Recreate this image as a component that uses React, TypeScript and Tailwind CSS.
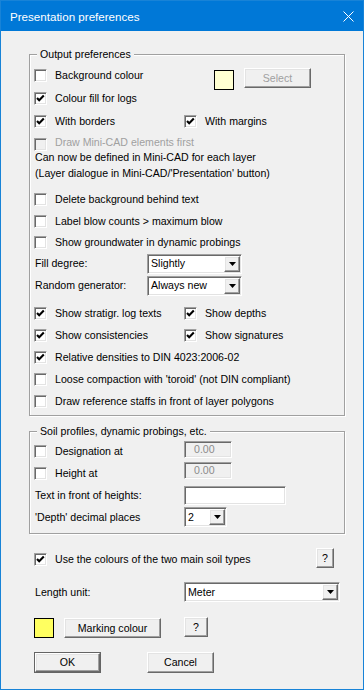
import type { ReactNode } from 'react';

const sunken =
  'border border-t-[#a0a0a0] border-l-[#a0a0a0] border-b-white border-r-white shadow-[inset_1px_1px_0_#696969,inset_-1px_-1px_0_#e3e3e3]';
const raised =
  'border border-t-white border-l-white border-r-[#696969] border-b-[#696969] shadow-[inset_-1px_-1px_0_#a0a0a0,inset_1px_1px_0_#e3e3e3] bg-[#f0f0f0]';

function Check({ checked, disabled }: { checked?: boolean; disabled?: boolean }) {
  return (
    <span className={`shrink-0 w-[13px] h-[13px] ${sunken} ${disabled ? 'bg-[#f0f0f0]' : 'bg-white'}`}>
      {checked && (
        <svg width="11" height="11" viewBox="0 0 11 11" className="block">
          <polyline points="2,5 4.2,7.3 8.8,2.6" fill="none" stroke="#000" strokeWidth="2.1" />
        </svg>
      )}
    </span>
  );
}

function CheckLabel({ label, checked, disabled }: { label: string; checked?: boolean; disabled?: boolean }) {
  return (
    <div className="flex items-center">
      <Check checked={checked} disabled={disabled} />
      <span className={`ml-[8px] whitespace-nowrap ${disabled ? 'text-[#a0a0a0]' : ''}`}>{label}</span>
    </div>
  );
}

function Arrow() {
  return (
    <span className={`mr-[1px] flex h-[16px] w-[16px] shrink-0 items-center justify-center ${raised}`}>
      <svg width="7" height="4" viewBox="0 0 7 4" className="block">
        <polygon points="0,0 7,0 3.5,4" fill="#000" />
      </svg>
    </span>
  );
}

function Select({ value, className }: { value: string; className: string }) {
  return (
    <div className={`flex h-[20px] items-center bg-white ${sunken} ${className}`}>
      <span className="flex-1 pl-[3px] whitespace-nowrap">{value}</span>
      <Arrow />
    </div>
  );
}

function Button({ children, className, disabled }: { children: ReactNode; className: string; disabled?: boolean }) {
  return (
    <div className={`flex items-center justify-center ${raised} ${disabled ? 'text-[#a0a0a0]' : ''} ${className}`}>
      {children}
    </div>
  );
}

function Group({ title, children, className }: { title: string; children: ReactNode; className: string }) {
  return (
    <div
      className={`relative ml-[28px] w-[316px] border border-[#a0a0a0] pl-[4px] pt-[9px] shadow-[inset_1px_1px_0_#fff,1px_1px_0_#fff] ${className}`}
    >
      <span className="absolute left-[7px] top-[-8px] bg-[#f0f0f0] px-[3px] leading-[14px] whitespace-nowrap">
        {title}
      </span>
      {children}
    </div>
  );
}

export default function App() {
  return (
    <div className="flex h-[690px] w-[364px] flex-col border border-[#1883d7] bg-[#f0f0f0] font-['Liberation_Sans',Arial,sans-serif] text-[10.6px] leading-[13px] text-black">
      <div className="flex h-[30px] shrink-0 items-center justify-between bg-[#0078d7] pl-[9px] pr-[9px] text-[11.6px] text-white">
        <span>Presentation preferences</span>
        <svg width="11" height="11" viewBox="0 0 11 11" className="block">
          <path d="M0.5 0.5 L10.5 10.5 M10.5 0.5 L0.5 10.5" stroke="#fff" strokeWidth="1" />
        </svg>
      </div>

      <Group title="Output preferences" className="mt-[23px] pb-[3px]">
        <div className="flex h-[23px] items-center">
          <div className="w-[180px]">
            <CheckLabel label="Background colour" />
          </div>
          <span className="mt-[6px] h-[20px] w-[20px] self-start border border-black bg-[#ffffd2]" />
          <Button disabled className="ml-[10px] mt-[4px] h-[20px] w-[67px] self-start">
            Select
          </Button>
        </div>
        <div className="flex h-[23px] items-center">
          <CheckLabel label="Colour fill for logs" checked />
        </div>
        <div className="flex h-[23px] items-center">
          <div className="w-[150px]">
            <CheckLabel label="With borders" checked />
          </div>
          <CheckLabel label="With margins" checked />
        </div>
        <div className="flex h-[16px] items-start">
          <div className="mt-[5px] flex items-center">
            <Check disabled />
          </div>
          <span className="ml-[8px] mt-[3px] text-[#a0a0a0]">Draw Mini-CAD elements first</span>
        </div>
        <div className="pl-[1px] leading-[16px]">
          <div>Can now be defined in Mini-CAD for each layer</div>
          <div>(Layer dialogue in Mini-CAD/'Presentation' button)</div>
        </div>
        <div className="mt-[7px] flex h-[22px] items-center">
          <CheckLabel label="Delete background behind text" />
        </div>
        <div className="flex h-[22px] items-center">
          <CheckLabel label="Label blow counts > maximum blow" />
        </div>
        <div className="flex h-[21px] items-center">
          <CheckLabel label="Show groundwater in dynamic probings" />
        </div>
        <div className="flex h-[21px] items-center">
          <span className="w-[113px] pl-[1px]">Fill degree:</span>
          <Select value="Slightly" className="w-[95px]" />
        </div>
        <div className="flex h-[23px] items-center">
          <span className="w-[113px] pl-[1px]">Random generator:</span>
          <Select value="Always new" className="w-[95px]" />
        </div>
        <div className="mt-[5px] flex h-[22px] items-center">
          <div className="w-[150px]">
            <CheckLabel label="Show stratigr. log texts" checked />
          </div>
          <CheckLabel label="Show depths" checked />
        </div>
        <div className="flex h-[22px] items-center">
          <div className="w-[150px]">
            <CheckLabel label="Show consistencies" checked />
          </div>
          <CheckLabel label="Show signatures" checked />
        </div>
        <div className="flex h-[22px] items-center">
          <CheckLabel label="Relative densities to DIN 4023:2006-02" checked />
        </div>
        <div className="flex h-[23px] items-center">
          <CheckLabel label="Loose compaction with 'toroid' (not DIN compliant)" />
        </div>
        <div className="flex h-[21px] items-center">
          <CheckLabel label="Draw reference staffs in front of layer polygons" />
        </div>
      </Group>

      <Group title="Soil profiles, dynamic probings, etc." className="mt-[15px] pb-[5px]">
        <div className="flex h-[21px] items-center">
          <div className="w-[150px]">
            <CheckLabel label="Designation at" />
          </div>
          <div className={`h-[17px] w-[48px] self-start pl-[9px] leading-[14px] text-[#8c8c8c] ${sunken}`}>0.00</div>
        </div>
        <div className="flex h-[22px] items-center">
          <div className="w-[150px]">
            <CheckLabel label="Height at" />
          </div>
          <div className={`h-[17px] w-[48px] self-start pl-[9px] leading-[14px] text-[#8c8c8c] ${sunken}`}>0.00</div>
        </div>
        <div className="flex h-[22px] items-center">
          <span className="w-[150px] pl-[1px]">Text in front of heights:</span>
          <div className={`h-[19px] w-[102px] bg-white ${sunken}`} />
        </div>
        <div className="flex h-[22px] items-center">
          <span className="w-[150px] pl-[1px]">'Depth' decimal places</span>
          <Select value="2" className="w-[43px]" />
        </div>
      </Group>

      <div className="ml-[33px] mt-[14px] flex h-[23px] items-center">
        <div className="w-[282px]">
          <CheckLabel label="Use the colours of the two main soil types" checked />
        </div>
        <Button className="h-[20px] w-[18px] self-start">?</Button>
      </div>

      <div className="ml-[33px] mt-[11px] flex h-[20px] items-center">
        <span className="w-[150px] pl-[1px]">Length unit:</span>
        <Select value="Meter" className="w-[156px]" />
      </div>

      <div className="ml-[33px] mt-[16px] flex h-[20px] items-center">
        <span className="h-[20px] w-[20px] border border-black bg-[#ffff60]" />
        <Button className="ml-[10px] h-[20px] w-[97px]">Marking colour</Button>
        <Button className="-mt-[2px] ml-[23px] h-[20px] w-[24px]">?</Button>
      </div>

      <div className="ml-[33px] mt-[14px] flex h-[21px] items-center">
        <div className="h-[21px] w-[67px] border border-[#646464]">
          <Button className="h-full w-full">OK</Button>
        </div>
        <Button className="ml-[46px] h-[21px] w-[67px]">Cancel</Button>
      </div>
    </div>
  );
}
